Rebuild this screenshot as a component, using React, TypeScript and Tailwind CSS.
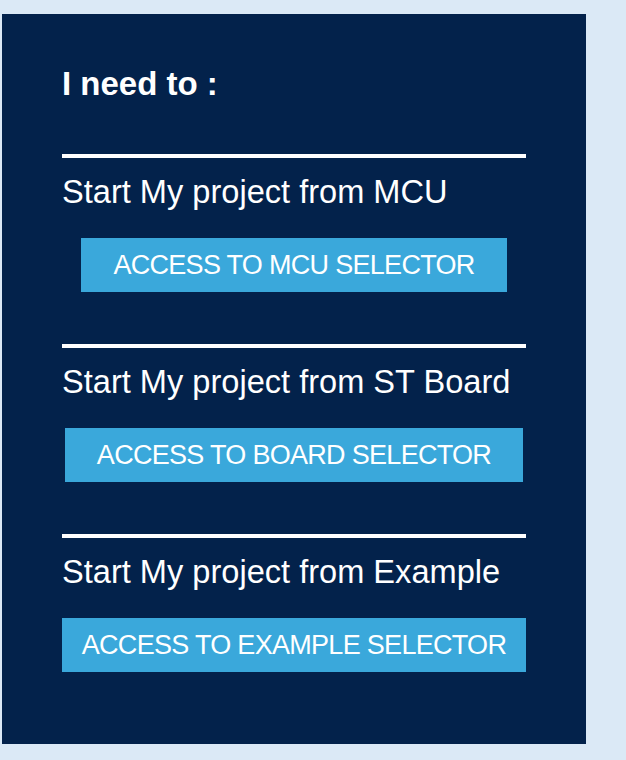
const sections = [
  { title: "Start My project from MCU", action: "ACCESS TO MCU SELECTOR", pad: "px-8" },
  { title: "Start My project from ST Board", action: "ACCESS TO BOARD SELECTOR", pad: "px-8" },
  { title: "Start My project from Example", action: "ACCESS TO EXAMPLE SELECTOR", pad: "w-full" },
];

export default function App() {
  return (
    <main className="min-h-screen bg-[#dbe9f6] pl-[2px] pt-[14px] font-['Liberation_Sans',Arial,sans-serif]">
      <section className="w-[584px] bg-[#03224b] px-[60px] pb-[72px] pt-[50px] text-white">
        <h1 className="text-[33px] font-bold leading-[40px]">I need to :</h1>

        {sections.map((s, i) => (
          <div key={s.action} className={i === 0 ? "mt-[50px]" : "mt-[52px]"}>
            <div className="h-1 w-full bg-white" />
            <p className="mt-[14px] text-[32.6px] leading-[40px]">{s.title}</p>
            <div className="mt-[26px] flex justify-center">
              <button
                className={`h-[54px] ${s.pad} whitespace-nowrap bg-[#3aa8db] text-center text-[27px] tracking-[-0.7px] text-white`}
              >
                {s.action}
              </button>
            </div>
          </div>
        ))}
      </section>
    </main>
  );
}
